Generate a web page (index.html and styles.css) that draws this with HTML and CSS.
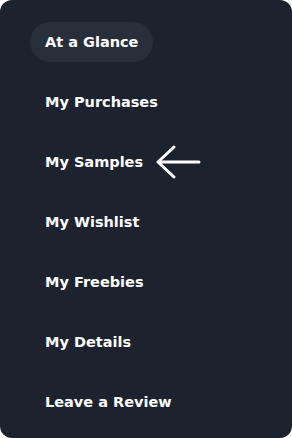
FILE: index.html
```html
<!DOCTYPE html>
<html lang="en">
<head>
    <meta charset="UTF-8">
    <meta name="viewport" content="width=device-width, initial-scale=1.0">
    <title>Account menu</title>
    <link rel="stylesheet" href="styles.css">
</head>
<body>
    <nav class="panel">
        <a href="#glance" class="nav-item active">At a Glance</a>
        <a href="#purchases" class="nav-item">My Purchases</a>
        <a href="#samples" class="nav-item">My Samples
            <svg class="arrow" width="48" height="36" viewBox="0 0 48 36" aria-hidden="true">
                <path d="M45 18H4M20 3L4 18L20 33" fill="none" stroke="#fff" stroke-width="3" stroke-linecap="round" stroke-linejoin="round"/>
            </svg>
        </a>
        <a href="#wishlist" class="nav-item">My Wishlist</a>
        <a href="#freebies" class="nav-item">My Freebies</a>
        <a href="#details" class="nav-item">My Details</a>
        <a href="#review" class="nav-item">Leave a Review</a>
    </nav>
</body>
</html>
```

FILE: styles.css
```css
body {
    margin: 0;
    padding: 0;
    background-color: #ffffff;
    font-family: "DejaVu Sans", Inter, sans-serif;
}
.panel {
    width: 292px;
    height: 438px;
    box-sizing: border-box;
    background-color: #1d232e;
    border-radius: 12px;
    padding: 22px 0 0 30px;
    display: flex;
    flex-direction: column;
    align-items: flex-start;
    gap: 20px;
}
.nav-item {
    height: 40px;
    padding: 0 15px;
    display: flex;
    align-items: center;
    color: #ffffff;
    text-decoration: none;
    font-size: 14.5px;
    font-weight: 700;
    border-radius: 20px;
}
.nav-item.active {
    background-color: #272f3b;
}
.arrow {
    margin-left: 11px;
}
```
